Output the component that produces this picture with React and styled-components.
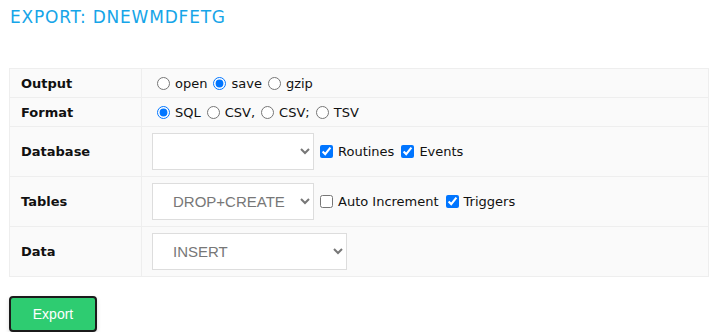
import React from "react";
import styled, { createGlobalStyle } from "styled-components";

const Global = createGlobalStyle`
  html, body { margin: 0; padding: 0; background: #fff; }
  body { font-family: "DejaVu Sans", Verdana, sans-serif; font-size: 13px; color: #111; }
`;

const Page = styled.div`
  padding: 7px 10px 0 9px;
`;

const Title = styled.h2`
  margin: 0 0 41px 1px;
  font-size: 17px;
  font-weight: normal;
  line-height: 20px;
  letter-spacing: 0.8px;
  color: #16a5e8;
`;

const Table = styled.table`
  width: 700px;
  border-collapse: collapse;
  background: #fafafa;
  border: 1px solid #eeeeee;
`;

const Row = styled.tr`
  height: ${(p) => p.$h}px;
  border-top: 1px solid #eeeeee;
`;

const Label = styled.th`
  width: 120px;
  padding: 0 0 0 11px;
  text-align: left;
  font-weight: bold;
  font-size: 13px;
  border-right: 1px solid #eeeeee;
`;

const Cell = styled.td`
  padding: 0 10px;
  white-space: nowrap;
`;

const Controls = styled.div`
  display: flex;
  align-items: center;
`;

const Opt = styled.label`
  display: inline-flex;
  align-items: center;
  margin-right: 1px;
  input[type="radio"] {
    margin: 0 5px 0 5px;
    width: 13px;
    height: 13px;
  }
  input[type="checkbox"] {
    margin: 0 5px 0 6px;
    width: 13px;
    height: 13px;
    accent-color: #0075ff;
  }
`;

const Select = styled.select`
  width: ${(p) => p.$w}px;
  height: 37px;
  padding: 0 8px 0 16px;
  border: 1px solid #dddddd;
  border-radius: 0;
  background: #fff;
  font-family: "Liberation Sans", Arial, sans-serif;
  font-size: 15px;
  color: #777;
  outline: none;
`;

const Button = styled.button`
  margin-top: 19px;
  width: 88px;
  height: 36px;
  background: #2ecc71;
  color: #fff;
  border: 2px solid #1b1b1b;
  border-radius: 4px;
  font-family: "Liberation Sans", Arial, sans-serif;
  font-size: 14px;
  box-shadow: 0 2px 4px rgba(0, 0, 0, 0.15);
  cursor: pointer;
`;

export default function App() {
  return (
    <Page>
      <Global />
      <Title>EXPORT: DNEWMDFETG</Title>
      <Table>
        <tbody>
          <Row $h={29}>
            <Label>Output</Label>
            <Cell>
              <Controls>
                <Opt><input type="radio" name="out" />open</Opt>
                <Opt><input type="radio" name="out" defaultChecked />save</Opt>
                <Opt><input type="radio" name="out" />gzip</Opt>
              </Controls>
            </Cell>
          </Row>
          <Row $h={29}>
            <Label>Format</Label>
            <Cell>
              <Controls>
                <Opt><input type="radio" name="fmt" defaultChecked />SQL</Opt>
                <Opt><input type="radio" name="fmt" />CSV,</Opt>
                <Opt><input type="radio" name="fmt" />CSV;</Opt>
                <Opt><input type="radio" name="fmt" />TSV</Opt>
              </Controls>
            </Cell>
          </Row>
          <Row $h={50}>
            <Label>Database</Label>
            <Cell>
              <Controls>
                <Select $w={162}><option></option></Select>
                <Opt><input type="checkbox" defaultChecked />Routines</Opt>
                <Opt><input type="checkbox" defaultChecked />Events</Opt>
              </Controls>
            </Cell>
          </Row>
          <Row $h={50}>
            <Label>Tables</Label>
            <Cell>
              <Controls>
                <Select $w={162}><option>DROP+CREATE</option></Select>
                <Opt><input type="checkbox" />Auto Increment</Opt>
                <Opt><input type="checkbox" defaultChecked />Triggers</Opt>
              </Controls>
            </Cell>
          </Row>
          <Row $h={50}>
            <Label>Data</Label>
            <Cell>
              <Controls>
                <Select $w={195}><option>INSERT</option></Select>
              </Controls>
            </Cell>
          </Row>
        </tbody>
      </Table>
      <Button>Export</Button>
    </Page>
  );
}
